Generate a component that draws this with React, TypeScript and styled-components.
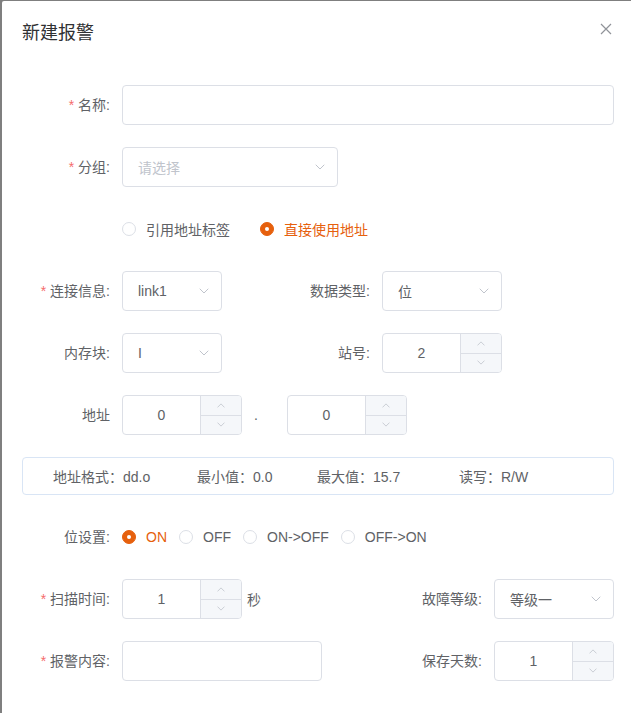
import React from 'react';
import styled, { createGlobalStyle } from 'styled-components';

const ORANGE = '#e6600d';

const GlobalStyle = createGlobalStyle`
  body {
    margin: 0;
    background: #7f7f7f;
    overflow: hidden;
    font-family: "Liberation Sans", "Noto Sans CJK SC", sans-serif;
    font-size: 14px;
    color: #606266;
  }
`;

const Dialog = styled.div`
  position: relative;
  margin: 1px 0 0 2px;
  width: 632px;
  min-height: 712px;
  background: #fff;
  border-radius: 2px;
  box-sizing: border-box;
`;

const Header = styled.div`
  padding: 20px 20px 10px;
`;

const Title = styled.span`
  font-size: 18px;
  line-height: 24px;
  color: #303133;
`;

const CloseBtn = styled.button`
  position: absolute;
  top: 20px;
  right: 20px;
  width: 16px;
  height: 16px;
  padding: 0;
  border: none;
  background: none;
  display: flex;
  align-items: center;
  justify-content: center;
  color: #909399;
`;

const Body = styled.div`
  padding: 30px 20px;
`;

const FormItem = styled.div<{ $gap?: boolean }>`
  display: flex;
  align-items: center;
  height: 40px;
  margin-bottom: ${({ $gap = true }) => ($gap ? '22px' : '0')};
`;

const Label = styled.label<{ $required?: boolean }>`
  width: 100px;
  flex-shrink: 0;
  box-sizing: border-box;
  padding-right: 12px;
  text-align: right;
  line-height: 40px;
  color: #606266;
  &::before {
    content: ${({ $required }) => ($required ? "'*'" : 'none')};
    color: #f56c6c;
    margin-right: 4px;
  }
`;

const TwoCol = styled.div`
  display: grid;
  grid-template-columns: 260px 1fr;
  margin-bottom: 22px;
`;

const SplitRow = styled.div`
  display: flex;
  justify-content: space-between;
  margin-bottom: 22px;
`;

const TextInput = styled.input<{ $w?: number }>`
  width: ${({ $w }) => ($w ? `${$w}px` : '100%')};
  height: 40px;
  box-sizing: border-box;
  border: 1px solid #dcdfe6;
  border-radius: 4px;
  padding: 0 15px;
  font: inherit;
  color: #606266;
  outline: none;
  background: #fff;
`;

const SelectBox = styled.div<{ $w: number }>`
  width: ${({ $w }) => $w}px;
  height: 40px;
  box-sizing: border-box;
  border: 1px solid #dcdfe6;
  border-radius: 4px;
  padding: 0 12px 0 15px;
  display: flex;
  align-items: center;
  justify-content: space-between;
`;

const SelectText = styled.span<{ $placeholder?: boolean }>`
  color: ${({ $placeholder }) => ($placeholder ? '#c0c4cc' : '#606266')};
`;

const NumberBox = styled.div`
  width: 120px;
  height: 40px;
  box-sizing: border-box;
  border: 1px solid #dcdfe6;
  border-radius: 4px;
  display: flex;
  overflow: hidden;
`;

const NumberValue = styled.span`
  flex: 1;
  text-align: center;
  line-height: 38px;
  color: #606266;
`;

const Controls = styled.div`
  width: 40px;
  display: flex;
  flex-direction: column;
  border-left: 1px solid #dcdfe6;
  background: #f5f7fa;
`;

const ControlBtn = styled.span<{ $top?: boolean }>`
  flex: 1;
  display: flex;
  align-items: center;
  justify-content: center;
  border-bottom: ${({ $top }) => ($top ? '1px solid #dcdfe6' : 'none')};
`;

const Suffix = styled.span`
  margin-left: 5px;
  color: #606266;
`;

const Dot = styled.span`
  padding: 0 29px 0 12px;
  color: #606266;
`;

const RadioGroup = styled.div<{ $spacing: number }>`
  display: flex;
  align-items: center;
  gap: ${({ $spacing }) => $spacing}px;
`;

const RadioLabel = styled.span<{ $checked?: boolean }>`
  display: inline-flex;
  align-items: center;
  color: ${({ $checked }) => ($checked ? ORANGE : '#606266')};
`;

const RadioCircle = styled.span<{ $checked?: boolean }>`
  width: 14px;
  height: 14px;
  box-sizing: border-box;
  border-radius: 50%;
  border: 1px solid ${({ $checked }) => ($checked ? ORANGE : '#dcdfe6')};
  background: ${({ $checked }) => ($checked ? ORANGE : '#fff')};
  display: flex;
  align-items: center;
  justify-content: center;
  &::after {
    content: '';
    width: 4px;
    height: 4px;
    border-radius: 50%;
    background: #fff;
    display: ${({ $checked }) => ($checked ? 'block' : 'none')};
  }
`;

const RadioText = styled.span`
  padding-left: 10px;
`;

const RadioIndent = styled.div`
  padding-left: 100px;
`;

const InfoBox = styled.div`
  height: 38px;
  box-sizing: border-box;
  border: 1px solid #d9e5f5;
  border-radius: 4px;
  padding: 0 30px;
  display: grid;
  grid-template-columns: 144px 120px 142px auto;
  align-items: center;
  margin-bottom: 22px;
  color: #606266;
`;

const Chevron = ({ up = false, size = 10 }: { up?: boolean; size?: number }) => (
  <svg width={size} height={size / 2 + 1} viewBox="0 0 10 6" fill="none">
    <polyline
      points={up ? '1,5 5,1 9,5' : '1,1 5,5 9,1'}
      stroke="#c0c4cc"
      strokeWidth="1"
      strokeLinecap="round"
      strokeLinejoin="round"
    />
  </svg>
);

const Select = ({ w, value, placeholder }: { w: number; value?: string; placeholder?: string }) => (
  <SelectBox $w={w}>
    <SelectText $placeholder={!value}>{value || placeholder}</SelectText>
    <Chevron />
  </SelectBox>
);

const NumberInput = ({ value }: { value: string }) => (
  <NumberBox>
    <NumberValue>{value}</NumberValue>
    <Controls>
      <ControlBtn $top>
        <Chevron up size={8} />
      </ControlBtn>
      <ControlBtn>
        <Chevron size={8} />
      </ControlBtn>
    </Controls>
  </NumberBox>
);

const Radio = ({ checked, children }: { checked?: boolean; children: React.ReactNode }) => (
  <RadioLabel $checked={checked}>
    <RadioCircle $checked={checked} />
    <RadioText>{children}</RadioText>
  </RadioLabel>
);

const App = () => {
  return (
    <>
      <GlobalStyle />
      <Dialog>
        <Header>
          <Title>新建报警</Title>
          <CloseBtn aria-label="close">
            <svg width="12" height="12" viewBox="0 0 12 12">
              <path d="M1 1 L11 11 M11 1 L1 11" stroke="#909399" strokeWidth="1.2" />
            </svg>
          </CloseBtn>
        </Header>
        <Body>
          <FormItem>
            <Label $required>名称:</Label>
            <TextInput readOnly />
          </FormItem>

          <FormItem>
            <Label $required>分组:</Label>
            <Select w={216} placeholder="请选择" />
          </FormItem>

          <FormItem>
            <RadioIndent>
              <RadioGroup $spacing={30}>
                <Radio>引用地址标签</Radio>
                <Radio checked>直接使用地址</Radio>
              </RadioGroup>
            </RadioIndent>
          </FormItem>

          <TwoCol>
            <FormItem $gap={false}>
              <Label $required>连接信息:</Label>
              <Select w={100} value="link1" />
            </FormItem>
            <FormItem $gap={false}>
              <Label>数据类型:</Label>
              <Select w={120} value="位" />
            </FormItem>
          </TwoCol>

          <TwoCol>
            <FormItem $gap={false}>
              <Label>内存块:</Label>
              <Select w={100} value="I" />
            </FormItem>
            <FormItem $gap={false}>
              <Label>站号:</Label>
              <NumberInput value="2" />
            </FormItem>
          </TwoCol>

          <FormItem>
            <Label>地址</Label>
            <NumberInput value="0" />
            <Dot>.</Dot>
            <NumberInput value="0" />
          </FormItem>

          <InfoBox>
            <span>地址格式：dd.o</span>
            <span>最小值：0.0</span>
            <span>最大值：15.7</span>
            <span>读写：R/W</span>
          </InfoBox>

          <FormItem>
            <Label>位设置:</Label>
            <RadioGroup $spacing={12}>
              <Radio checked>ON</Radio>
              <Radio>OFF</Radio>
              <Radio>ON-&gt;OFF</Radio>
              <Radio>OFF-&gt;ON</Radio>
            </RadioGroup>
          </FormItem>

          <SplitRow>
            <FormItem $gap={false}>
              <Label $required>扫描时间:</Label>
              <NumberInput value="1" />
              <Suffix>秒</Suffix>
            </FormItem>
            <FormItem $gap={false}>
              <Label>故障等级:</Label>
              <Select w={120} value="等级一" />
            </FormItem>
          </SplitRow>

          <SplitRow>
            <FormItem $gap={false}>
              <Label $required>报警内容:</Label>
              <TextInput readOnly $w={200} />
            </FormItem>
            <FormItem $gap={false}>
              <Label>保存天数:</Label>
              <NumberInput value="1" />
            </FormItem>
          </SplitRow>
        </Body>
      </Dialog>
    </>
  );
};

export default App;
